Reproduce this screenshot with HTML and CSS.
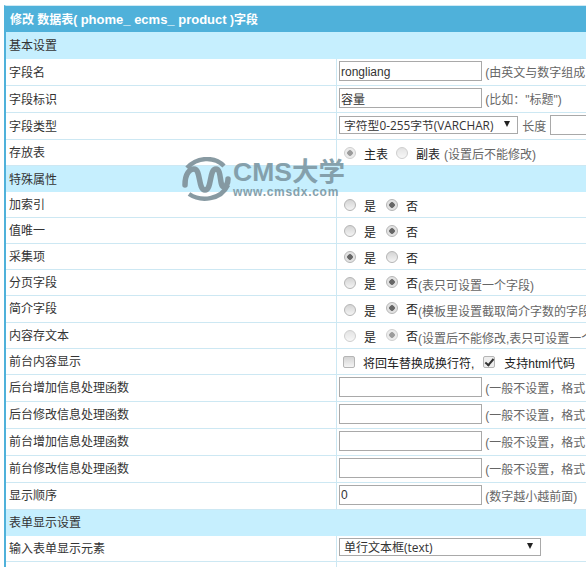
FILE: index.html
```html
<!DOCTYPE html>
<html lang="zh-CN">
<head>
<meta charset="UTF-8" />
<title>修改字段</title>
<link rel="stylesheet" href="styles.css">
</head>
<body>

<table class="form-table">
  <colgroup><col class="col-label"><col class="col-value"></colgroup>
  <tr class="title"><td colspan="2">修改 数据表( <span class="latin">phome_ ecms_ product</span> )字段</td></tr>

  <tr class="section"><td colspan="2">基本设置</td></tr>
  <tr class="h27">
    <td>字段名</td>
    <td><input class="text" type="text" value="rongliang"> <span class="hint">(由英文与数字组成</span></td>
  </tr>
  <tr class="h27">
    <td>字段标识</td>
    <td><input class="text" type="text" value="容量"> <span class="hint">(比如："标题")</span></td>
  </tr>
  <tr class="h27">
    <td>字段类型</td>
    <td>
      <span class="select type-select"><select><option>字符型0-255字节(VARCHAR)</option></select></span>
      <span class="hint len-label">长度</span>
      <input class="text len" type="text">
    </td>
  </tr>
  <tr class="h26">
    <td>存放表</td>
    <td class="muted-radios"><label class="opt main-opt"><input type="radio" name="tb" checked disabled>主表</label><label class="opt side-opt"><input type="radio" name="tb" disabled>副表</label><span class="hint opt-hint">(设置后不能修改)</span></td>
  </tr>

  <tr class="section s26"><td colspan="2">特殊属性</td></tr>
  <tr class="h26">
    <td>加索引</td>
    <td><label class="opt"><input type="radio" name="r1">是</label><label class="opt"><input type="radio" name="r1" checked>否</label></td>
  </tr>
  <tr class="h26">
    <td>值唯一</td>
    <td><label class="opt"><input type="radio" name="r2">是</label><label class="opt"><input type="radio" name="r2" checked>否</label></td>
  </tr>
  <tr class="h26">
    <td>采集项</td>
    <td><label class="opt"><input type="radio" name="r3" checked>是</label><label class="opt"><input type="radio" name="r3">否</label></td>
  </tr>
  <tr class="h26">
    <td>分页字段</td>
    <td><label class="opt"><input type="radio" name="r4">是</label><label class="opt"><input type="radio" name="r4" checked>否<span class="hint">(表只可设置一个字段)</span></label></td>
  </tr>
  <tr class="h26">
    <td>简介字段</td>
    <td><label class="opt"><input type="radio" name="r5">是</label><label class="opt"><input type="radio" name="r5" checked>否<span class="hint">(模板里设置截取简介字数的字段</span></label></td>
  </tr>
  <tr class="h26">
    <td>内容存文本</td>
    <td class="muted-radios"><label class="opt"><input type="radio" name="r6" disabled>是</label><label class="opt"><input type="radio" name="r6" checked disabled>否<span class="hint">(设置后不能修改,表只可设置一个</span></label></td>
  </tr>
  <tr class="h26">
    <td>前台内容显示</td>
    <td><label class="check first"><input type="checkbox">将回车替换成换行符,</label><label class="check"><input type="checkbox" checked>支持html代码</label></td>
  </tr>
  <tr class="h27">
    <td>后台增加信息处理函数</td>
    <td><input class="text" type="text"> <span class="hint">(一般不设置，格式</span></td>
  </tr>
  <tr class="h27">
    <td>后台修改信息处理函数</td>
    <td><input class="text" type="text"> <span class="hint">(一般不设置，格式</span></td>
  </tr>
  <tr class="h27">
    <td>前台增加信息处理函数</td>
    <td><input class="text" type="text"> <span class="hint">(一般不设置，格式</span></td>
  </tr>
  <tr class="h27">
    <td>前台修改信息处理函数</td>
    <td><input class="text" type="text"> <span class="hint">(一般不设置，格式</span></td>
  </tr>
  <tr class="h27">
    <td>显示顺序</td>
    <td><input class="text" type="text" value="0"> <span class="hint">(数字越小越前面)</span></td>
  </tr>

  <tr class="section s26"><td colspan="2">表单显示设置</td></tr>
  <tr class="h26">
    <td>输入表单显示元素</td>
    <td><span class="select form-select"><select><option>单行文本框(text)</option></select></span></td>
  </tr>
  <tr class="h26"><td></td><td></td></tr>
</table>

<!-- site watermark, sits over the table -->
<div class="watermark">
  <svg class="wm-logo" width="50" height="44" viewBox="0 0 50 44">
    <path d="M6 11C16 0 33 -1 43 9" fill="none" stroke="#82959e" stroke-width="4.5"/>
    <path d="M8 37C20 45 40 43 47 28" fill="none" stroke="#82959e" stroke-width="4.5"/>
    <path d="M4 28C4 16 9 12 13 12C20 12 17 33 24 33C31 33 28 12 35 12C41 12 38 30 43 30C45 30 47 26 47 22" fill="none" stroke="#82959e" stroke-width="5.5" stroke-linecap="round"/>
  </svg>
  <div class="wm-text">
    <div class="wm-name">CMS大学</div>
    <div class="wm-url">www.cmsdx.com</div>
  </div>
</div>

</body>
</html>
```

FILE: styles.css
```css
html, body {
  margin: 0; padding: 0; height: 567px; overflow: hidden;
  background: #fff;
}
body {
  padding-top: 5px;
  padding-left: 4px;
  box-sizing: border-box;
  position: relative;
  font-family: "Liberation Sans", "Noto Sans CJK SC", sans-serif;
  font-size: 12px; color: #333;
}
.form-table {
  width: 900px; table-layout: fixed;
  border-collapse: separate; border-spacing: 0;
  border-top: 1px solid #cfeaf5;
  border-left: 2px solid #4fb1da;
}
.col-label { width: 330px; }
.form-table td {
  padding: 0 0 2px 3px; white-space: nowrap; overflow: hidden;
  border-bottom: 1px solid #cde8f3;
  box-sizing: border-box;
}
.form-table td + td { border-left: 1px solid #cde8f3; padding-left: 2px; }
.title td {
  height: 26px; background: #4fb1da; color: #fff; font-weight: bold;
  border-bottom: 0; font-size: 12px; padding-left: 4px;
}
.latin { font-size: 13px; }
.section td { height: 27px; background: #c6effe; border-bottom: 0; }
.section.s26 td { height: 26px; }
.h27 td { height: 27px; }
.h26 td { height: 26px; }
input.text {
  width: 143px; height: 20px; box-sizing: border-box; margin: 0;
  border: 1px solid #a9a9a9; padding: 1px 1px 0; background: #fff;
  font: 12px "Liberation Sans", "Noto Sans CJK SC", sans-serif; color: #333;
  vertical-align: middle;
}
input.len { width: 60px; }
.hint { color: #666; vertical-align: middle; font-family: "Liberation Sans", "Noto Sans CJK TC", sans-serif; }
.select { display: inline-block; position: relative; vertical-align: middle; }
.select select {
  appearance: none; -webkit-appearance: none; display: block;
  height: 18px; margin: 0; padding: 0 0 0 4px;
  border: 1px solid #a9a9a9; border-radius: 0; background: #fff;
  font: 12px "Open Sans", "Noto Sans CJK SC", sans-serif; color: #333;
}
.select::after {
  content: ""; position: absolute; top: 5px; right: 8px;
  border-left: 3px solid transparent; border-right: 3px solid transparent;
  border-top: 6px solid #222;
}
.type-select select { width: 179px; font-size: 11.8px; }
.form-select select { width: 202px; }
.len-label { margin-left: 1px; }
.opt, .check { display: inline-block; vertical-align: middle; margin-top: 4px; color: #222; }
.opt { margin-right: 5px; }
.opt input, .check input {
  appearance: none; -webkit-appearance: none;
  margin: 0 8px 0 5px; vertical-align: 0;
  width: 12px; height: 12px; box-sizing: border-box;
  background: linear-gradient(#d4d4d4, #f4f4f4);
  border: 1px solid #b5b5b5;
}
.opt input { border-radius: 50%; }
.opt input:checked { background: radial-gradient(circle, #666 0 2.5px, #ddd 3px, #eee 100%); }
.muted-radios .opt input { opacity: 0.65; }
.main-opt { margin-right: 3px; }
.side-opt { margin-right: 4px; }
.opt-hint { display: inline-block; margin-top: 4px; }
.check input { border-radius: 2px; margin: 0 8px 0 4px; }
.check.first { margin-right: 5px; }
.check input:checked { background: #eee; position: relative; margin-right: 9px; }
.check input:checked::after {
  content: ""; position: absolute; left: 3px; top: 0;
  width: 3px; height: 7px; border: solid #333; border-width: 0 2px 2px 0;
  transform: rotate(40deg);
}
.watermark {
  position: absolute; left: 181px; top: 157px;
  display: flex; gap: 2px; opacity: 0.95;
  font-family: "Liberation Sans", "Noto Sans CJK SC", sans-serif;
  font-weight: bold; color: #819ca8;
}
.wm-name { font-size: 26.5px; line-height: 28px; margin-top: 1px; }
.wm-url { font-size: 12px; line-height: 12px; letter-spacing: 0.7px; }
```
